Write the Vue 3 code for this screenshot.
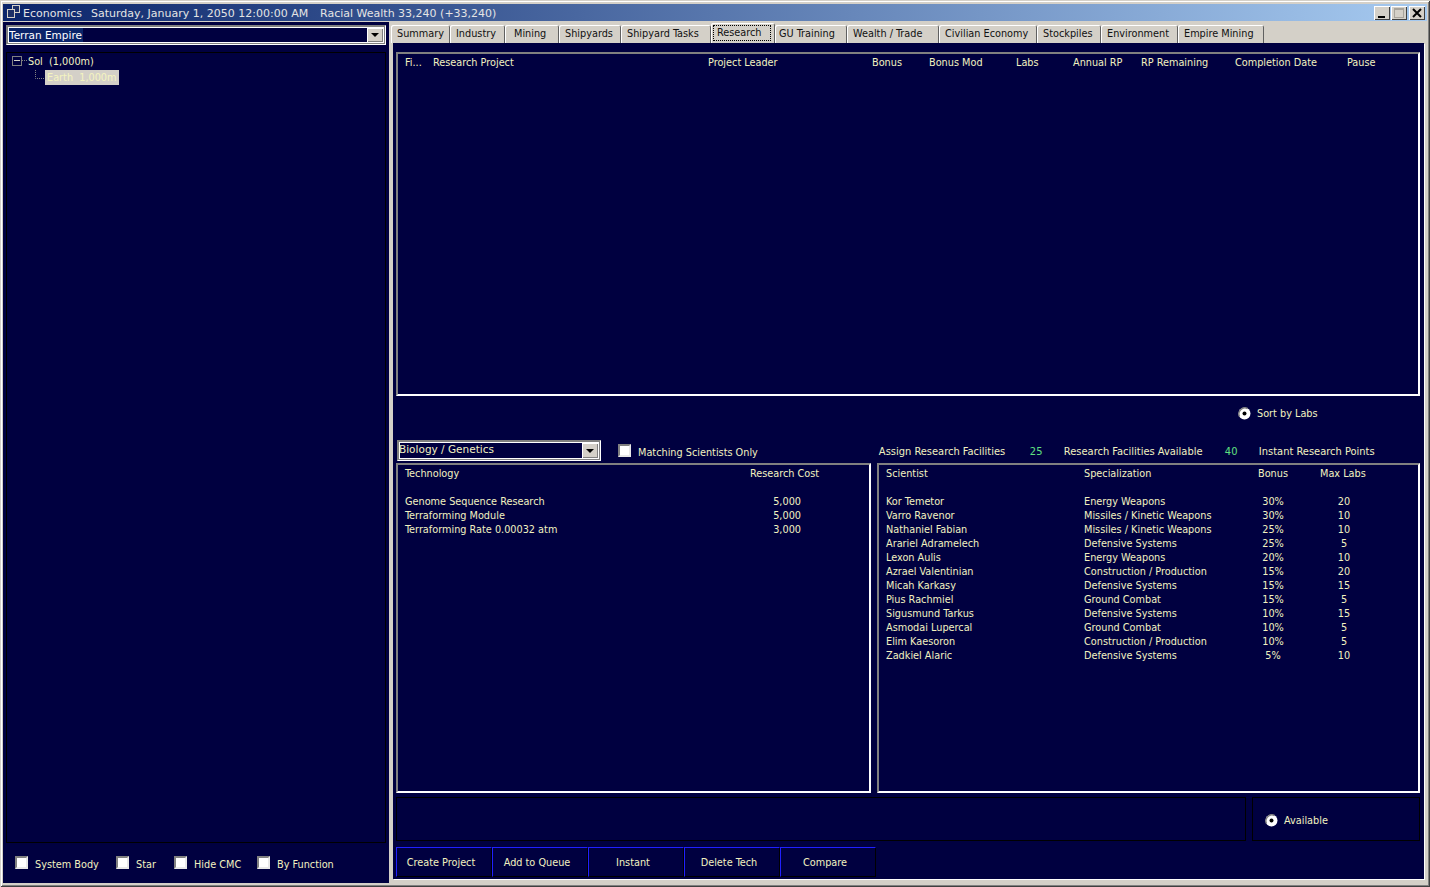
<script setup>
const tabs = [
  { label: 'Summary', width: 59 },
  { label: 'Industry', width: 55 },
  { label: 'Mining', width: 54, indent: 9 },
  { label: 'Shipyards', width: 62 },
  { label: 'Shipyard Tasks', width: 90 },
  { label: 'Research', width: 64, indent: 2, active: true },
  { label: 'GU Training', width: 72, indent: 4 },
  { label: 'Wealth / Trade', width: 92 },
  { label: 'Civilian Economy', width: 98 },
  { label: 'Stockpiles', width: 64 },
  { label: 'Environment', width: 77 },
  { label: 'Empire Mining', width: 86 }
]

const projectColumns = ['Fi...', 'Research Project', 'Project Leader', 'Bonus', 'Bonus Mod', 'Labs', 'Annual RP', 'RP Remaining', 'Completion Date', 'Pause']

const techs = [
  { name: 'Genome Sequence Research', cost: '5,000' },
  { name: 'Terraforming Module', cost: '5,000' },
  { name: 'Terraforming Rate 0.00032 atm', cost: '3,000' }
]

const scientists = [
  { name: 'Kor Temetor', spec: 'Energy Weapons', bonus: '30%', labs: 20 },
  { name: 'Varro Ravenor', spec: 'Missiles / Kinetic Weapons', bonus: '30%', labs: 10 },
  { name: 'Nathaniel Fabian', spec: 'Missiles / Kinetic Weapons', bonus: '25%', labs: 10 },
  { name: 'Arariel Adramelech', spec: 'Defensive Systems', bonus: '25%', labs: 5 },
  { name: 'Lexon Aulis', spec: 'Energy Weapons', bonus: '20%', labs: 10 },
  { name: 'Azrael Valentinian', spec: 'Construction / Production', bonus: '15%', labs: 20 },
  { name: 'Micah Karkasy', spec: 'Defensive Systems', bonus: '15%', labs: 15 },
  { name: 'Pius Rachmiel', spec: 'Ground Combat', bonus: '15%', labs: 5 },
  { name: 'Sigusmund Tarkus', spec: 'Defensive Systems', bonus: '10%', labs: 15 },
  { name: 'Asmodai Lupercal', spec: 'Ground Combat', bonus: '10%', labs: 5 },
  { name: 'Elim Kaesoron', spec: 'Construction / Production', bonus: '10%', labs: 5 },
  { name: 'Zadkiel Alaric', spec: 'Defensive Systems', bonus: '5%', labs: 10 }
]

const treeChecks = [
  { label: 'System Body', width: 101 },
  { label: 'Star', width: 58 },
  { label: 'Hide CMC', width: 83 },
  { label: 'By Function', width: 90 }
]

const actions = ['Create Project', 'Add to Queue', 'Instant', 'Delete Tech', 'Compare']
</script>

<template>
  <div class="window">
    <header class="titlebar">
      <svg class="app-icon" width="16" height="15" viewBox="0 0 16 15">
        <rect x="6.5" y="0.5" width="7" height="7" fill="#1c2f66" stroke="#d4d0c8" />
        <rect x="1.5" y="4.5" width="7" height="8" fill="#1c2f66" stroke="#d4d0c8" />
      </svg>
      <span class="title-text">Economics</span>
      <span class="title-date">Saturday, January 1, 2050 12:00:00 AM</span>
      <span class="title-wealth">Racial Wealth 33,240 (+33,240)</span>
      <div class="win-buttons">
        <button class="win-btn"><svg width="14" height="12"><rect x="3" y="9" width="7" height="2" fill="#000" /></svg></button>
        <button class="win-btn"><svg width="14" height="12"><rect x="2.5" y="1.5" width="9" height="9" fill="none" stroke="#a8a49c" /><rect x="2" y="1" width="10" height="2" fill="#a8a49c" /></svg></button>
        <button class="win-btn close"><svg width="14" height="12"><path d="M3 2 L11 10 M11 2 L3 10" stroke="#000" stroke-width="2" /></svg></button>
      </div>
    </header>

    <div class="main">
      <aside class="left">
        <div class="combo wide">
          <span class="combo-value selected">Terran Empire</span>
          <span class="combo-btn"><i class="arrow"></i></span>
        </div>
        <div class="tree">
          <div class="tree-row sol">
            <svg class="expander" width="16" height="10" viewBox="0 0 16 10">
              <rect x="0.5" y="0.5" width="9" height="9" fill="none" stroke="#808080" />
              <path d="M2 4.5 H8" stroke="#d4d0c8" />
              <path d="M10 4.5 H15" stroke="#808080" stroke-dasharray="1 1" />
            </svg>
            <span>Sol&nbsp; (1,000m)</span>
          </div>
          <div class="tree-row earth-row">
            <svg class="branch" width="10" height="9" viewBox="0 0 10 9">
              <path d="M0.5 0 V8.5 H10" fill="none" stroke="#808080" stroke-dasharray="1 1" />
            </svg>
            <span class="earth">Earth&nbsp; 1,000m</span>
          </div>
        </div>
        <div class="tree-options">
          <label v-for="c in treeChecks" :key="c.label" class="check" :style="{ width: c.width + 'px' }">
            <i class="box"></i><span>{{ c.label }}</span>
          </label>
        </div>
      </aside>

      <div class="right">
        <nav class="tabs">
          <div
            v-for="t in tabs"
            :key="t.label"
            class="tab"
            :class="{ active: t.active }"
            :style="{ width: t.width + 'px', paddingLeft: (t.indent ?? 6) + 'px' }"
          >
            <span class="tab-label">{{ t.label }}</span>
          </div>
        </nav>

        <section class="content">
          <div class="inset projects">
            <div class="project-head">
              <span v-for="col in projectColumns" :key="col">{{ col }}</span>
            </div>
          </div>

          <div class="sort-row">
            <span class="radio-item">
              <svg class="radio" width="13" height="13" viewBox="0 0 13 13">
                <circle cx="6.5" cy="6.5" r="6" fill="#fff" />
                <path d="M1.5 9.5 A6 6 0 0 1 9.5 1.5" fill="none" stroke="#808080" stroke-width="1.4" />
                <circle cx="6.5" cy="6.5" r="2" fill="#000" />
              </svg>
              Sort by Labs
            </span>
          </div>

          <div class="filter-row">
            <div class="combo narrow">
              <span class="combo-value">Biology / Genetics</span>
              <span class="combo-btn"><i class="arrow"></i></span>
            </div>
            <label class="check matching"><i class="box"></i><span>Matching Scientists Only</span></label>
            <div class="facilities">
              <span class="fac-assign">Assign Research Facilities</span>
              <span class="fac-num first">25</span>
              <span class="fac-avail">Research Facilities Available</span>
              <span class="fac-num second">40</span>
              <span>Instant Research Points</span>
            </div>
          </div>

          <div class="lists">
            <div class="inset tech-list">
              <div class="tech-row head"><span>Technology</span><span>Research Cost</span></div>
              <div class="tech-row spacer"></div>
              <div v-for="t in techs" :key="t.name" class="tech-row">
                <span>{{ t.name }}</span><span class="cost">{{ t.cost }}</span>
              </div>
            </div>
            <div class="inset sci-list">
              <div class="sci-row head"><span>Scientist</span><span>Specialization</span><span>Bonus</span><span>Max Labs</span></div>
              <div class="sci-row spacer"></div>
              <div v-for="s in scientists" :key="s.name" class="sci-row">
                <span>{{ s.name }}</span><span>{{ s.spec }}</span><span class="num bonus">{{ s.bonus }}</span><span class="num labs">{{ s.labs }}</span>
              </div>
            </div>
          </div>

          <div class="status-row">
            <div class="status-box grow"></div>
            <div class="status-box avail">
              <span class="radio-item">
                <svg class="radio" width="13" height="13" viewBox="0 0 13 13">
                  <circle cx="6.5" cy="6.5" r="6" fill="#fff" />
                  <path d="M1.5 9.5 A6 6 0 0 1 9.5 1.5" fill="none" stroke="#808080" stroke-width="1.4" />
                  <circle cx="6.5" cy="6.5" r="2" fill="#000" />
                </svg>
                Available
              </span>
            </div>
          </div>

          <div class="actions">
            <button v-for="a in actions" :key="a" class="action">{{ a }}</button>
          </div>
        </section>
      </div>
    </div>
  </div>
</template>

<style>
html, body { margin: 0; background: #d4d0c8; }
</style>

<style scoped>
.window {
  width: 1430px;
  height: 887px;
  box-sizing: border-box;
  padding: 4px 3px 4px 3px;
  background: #d4d0c8;
  display: flex;
  flex-direction: column;
  overflow: hidden;
  font-family: "DejaVu Sans", sans-serif;
  font-stretch: condensed;
  font-size: 10.8px;
  color: #f2f2c0;
  box-shadow: inset 1px 1px 0 #d4d0c8, inset -1px -1px 0 #404040, inset 2px 2px 0 #fff, inset -2px -2px 0 #808080;
}

.titlebar {
  height: 17px;
  flex: none;
  display: flex;
  align-items: center;
  padding-left: 3px;
  background: linear-gradient(90deg, #0a246a, #a6caf0);
  color: #e4e4e4;
  font-stretch: normal;
  font-size: 11px;
  white-space: nowrap;
}
.app-icon { flex: none; margin-right: 1px; }
.title-text { width: 68px; padding-top: 1px; }
.title-date { width: 229px; padding-top: 1px; }
.title-wealth { padding-top: 1px; }
.win-buttons { margin-left: auto; display: flex; gap: 1px; padding-right: 2px; }
.win-btn {
  width: 16px;
  height: 14px;
  padding: 0;
  display: flex;
  align-items: center;
  justify-content: center;
  border: 0;
  background: #d4d0c8;
  box-shadow: inset 1px 1px 0 #fff, inset -1px -1px 0 #404040;
}
.win-btn.close { margin-left: 1px; }

.main { flex: 1; min-height: 0; display: flex; gap: 4px; padding-top: 1px; }

.left {
  width: 386px;
  flex: none;
  box-sizing: border-box;
  background: #000040;
  padding: 3px 3px 0 3px;
  display: flex;
  flex-direction: column;
}

.combo {
  display: flex;
  box-sizing: border-box;
  background: #000040;
  border: 1px solid;
  border-color: #808080 #fff #fff #808080;
  box-shadow: inset 0 0 0 1px #808080, inset 0 0 0 2px #fff;
  padding: 2px;
  align-items: stretch;
}
.combo.wide { height: 20px; }
.combo.narrow { height: 21px; width: 204px; flex: none; margin-left: 1px; padding-left: 1px; }
.combo-value { flex: 1; line-height: 14px; color: #f2f2c0; font-stretch: normal; font-size: 10.5px; white-space: nowrap; }
.narrow .combo-value { margin-top: -1px; }
.combo-value.selected { flex: 0 0 auto; background: #0a246a; color: #fff; padding-right: 1px; }
.combo-btn {
  margin-left: auto;
  width: 16px;
  flex: none;
  background: #d4d0c8;
  box-shadow: inset 1px 1px 0 #fff, inset -1px -1px 0 #808080;
  display: flex;
  align-items: center;
  justify-content: center;
}
.arrow { width: 0; height: 0; border: 4px solid transparent; border-top-color: #000; border-bottom: 0; }

.tree {
  flex: 1;
  min-height: 0;
  margin-top: 7px;
  border: 1px solid #000;
}
.tree-row { display: flex; align-items: center; height: 16px; }
.sol { padding-left: 5px; }
.expander { flex: none; }
.earth-row { padding-left: 28px; }
.branch { flex: none; margin-top: -6px; }
.earth { background: #d4d0c8; line-height: 15px; padding: 0 3px 0 2px; color: #f4f4c0; }

.tree-options { height: 40px; flex: none; display: flex; align-items: center; padding: 2px 0 0 9px; box-sizing: border-box; }

.check { display: flex; align-items: center; flex: none; }
.box {
  width: 13px;
  height: 13px;
  flex: none;
  box-sizing: border-box;
  background: #fff;
  border: 2px solid;
  border-color: #808080 #e8e8e8 #e8e8e8 #808080;
  margin-right: 7px;
  margin-top: -4px;
}

.right { flex: 1; min-width: 0; display: flex; flex-direction: column; padding: 0 3px 4px 0; }

.tabs { height: 21px; flex: none; display: flex; margin-left: -2px; align-items: flex-end; }
.tab {
  height: 18px;
  box-sizing: border-box;
  flex: none;
  line-height: 17px;
  border-radius: 2px 2px 0 0;
  box-shadow: inset 1px 1px 0 #fff, inset -1px 0 0 #606060;
  white-space: nowrap;
  color: #111;
}
.tab.active { height: 20px; margin-top: -2px; padding-top: 2px; line-height: 16px; }
.tab.active .tab-label {
  display: inline-block;
  box-sizing: border-box;
  width: 58px;
  height: 16px;
  padding-left: 4px;
  outline: 1px dotted #000;
  outline-offset: -1px;
}

.content {
  flex: 1;
  min-height: 0;
  background: #000040;
  box-shadow: 1px 1px 0 #fff;
  padding: 9px 4px 2px 3px;
  display: flex;
  flex-direction: column;
}

.inset {
  box-sizing: border-box;
  border: 2px solid;
  border-color: #808080 #fff #fff #808080;
}

.projects { height: 344px; flex: none; padding: 2px 0 0 7px; }
.project-head {
  display: grid;
  grid-template-columns: 28px 275px 164px 57px 87px 57px 68px 94px 112px auto;
  line-height: 14px;
  white-space: nowrap;
}

.sort-row { height: 44px; flex: none; display: flex; align-items: center; padding-left: 842px; margin-top: -5px; margin-bottom: 5px; }
.radio-item { display: flex; align-items: center; gap: 6px; white-space: nowrap; }
.radio { flex: none; }

.filter-row { height: 23px; flex: none; display: flex; align-items: flex-start; }
.matching { margin-left: 17px; margin-top: 4px; line-height: 14px; align-items: flex-start; }
.matching .box { margin-top: 0; }
.matching span { margin-top: 2px; }
.facilities { margin-left: 121px; margin-top: 5px; display: flex; font-size: 11px; line-height: 14px; white-space: nowrap; }
.fac-assign { width: 151px; }
.fac-avail { width: 161px; }
.fac-num { color: #60e080; }
.first { width: 34px; }
.second { width: 34px; }

.lists { height: 330px; flex: none; display: flex; gap: 6px; }
.tech-list { width: 475px; flex: none; padding: 2px 0 0 7px; }
.sci-list { flex: 1; min-width: 0; padding: 2px 0 0 7px; }

.tech-row {
  display: grid;
  grid-template-columns: 345px 70px;
  height: 14px;
  line-height: 14px;
  white-space: nowrap;
}
.cost { text-align: right; padding-right: 19px; }

.sci-row {
  display: grid;
  grid-template-columns: 198px 174px 62px 48px;
  height: 14px;
  line-height: 14px;
  white-space: nowrap;
}
.num { text-align: center; }
.bonus { width: 30px; }

.status-row { height: 44px; flex: none; display: flex; gap: 6px; margin-top: 4px; }
.status-box { border: 1px solid #000; box-sizing: border-box; }
.grow { flex: 1; }
.avail { width: 168px; flex: none; display: flex; align-items: center; padding: 3px 0 0 12px; }

.actions { display: flex; margin-top: 6px; height: 30px; flex: none; }
.action {
  width: 96px;
  height: 30px;
  box-sizing: border-box;
  padding: 0 6px 0 0;
  background: #000040;
  color: #f2f2c0;
  font: inherit;
  border: 1px solid;
  border-color: #2020ff #000 #000 #2020ff;
}
</style>
